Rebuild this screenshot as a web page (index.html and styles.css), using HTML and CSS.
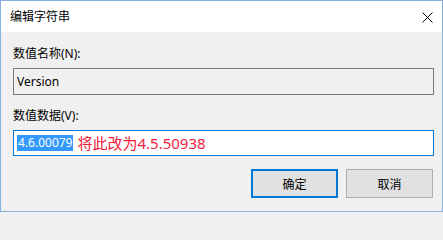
FILE: index.html
```html
<!DOCTYPE html>
<html lang="zh">
<head>
<meta charset="utf-8">
<title>编辑字符串</title>
<link rel="stylesheet" href="styles.css">
</head>
<body>
<div class="window">
  <div class="titlebar">
    <span class="title">编辑字符串</span>
    <svg class="close" width="11" height="11" viewBox="0 0 11 11">
      <path d="M0.5 0.5 L10.5 10.5 M10.5 0.5 L0.5 10.5" stroke="#000" stroke-width="1" fill="none"/>
    </svg>
  </div>
  <div class="content">
    <div class="label">数值名称(N):</div>
    <div class="field disabled">Version</div>
    <div class="label second">数值数据(V):</div>
    <div class="field focused"><span class="sel">4.6.00079</span><span class="note">将此改为4.5.50938</span></div>
    <div class="buttons">
      <div class="btn default">确定</div>
      <div class="btn">取消</div>
    </div>
  </div>
</div>
</body>
</html>
```
FILE: styles.css
```css
* { box-sizing: border-box; }
html, body { margin: 0; padding: 0; background: #f0f0f0; }
body {
  font-family: "Noto Sans", "Noto Sans CJK SC", sans-serif;
  font-size: 12px;
  color: #000;
}
.window {
  width: 443px;
  height: 212px;
  border: 1px solid #86b1de;
  background: #f0f0f0;
  display: flex;
  flex-direction: column;
}
.titlebar {
  height: 31px;
  background: #fff;
  display: flex;
  align-items: center;
  padding: 0 9px 0 9px;
}
.title {
  flex: 1;
  font-family: "Noto Sans CJK SC", sans-serif;
  font-size: 12px;
  line-height: 16px;
  color: #000;
  margin-top: -1px;
}
.close { display: block; margin-right: 0; margin-top: 1px; }
.content {
  flex: 1;
  padding: 14px 8px 0 12px;
  display: flex;
  flex-direction: column;
}
.label {
  font-family: "Noto Sans", "Noto Sans CJK SC", sans-serif;
  font-size: 12px;
  line-height: 16px;
  height: 16px;
  margin-bottom: 6px;
}
.label.second { margin-top: 13px; }
.field {
  height: 27px;
  border: 1px solid #7a7a7a;
  display: flex;
  align-items: center;
  padding-left: 3px;
  font-size: 12px;
  white-space: nowrap;
}
.field.disabled { background: #f0f0f0; }
.field.focused {
  height: 26px;
  border-color: #0078d7;
  background: #fff;
}
.sel {
  background: #3399ff;
  color: #fff;
  line-height: 16px;
  padding: 0 1px;
}
.note {
  color: #f2213b;
  font-size: 15px;
  line-height: 18px;
  margin-left: 4px;
  font-family: "Noto Sans", "Noto Sans CJK SC", sans-serif;
}
.buttons {
  display: flex;
  justify-content: flex-end;
  gap: 8px;
  margin-top: 13px;
  padding-right: 1px;
}
.btn {
  width: 87px;
  height: 29px;
  background: #e1e1e1;
  border: 1px solid #adadad;
  display: flex;
  align-items: center;
  justify-content: center;
  font-family: "Noto Sans CJK SC", sans-serif;
  font-size: 12px;
}
.btn.default { border: 2px solid #0078d7; }
```
